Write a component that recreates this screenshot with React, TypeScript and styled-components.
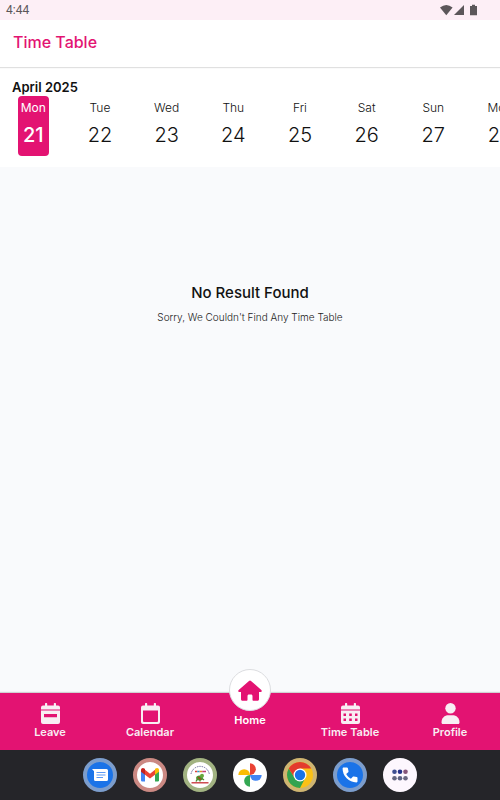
import React from "react";
import styled, { createGlobalStyle } from "styled-components";

const pink = "#e31372";

const GlobalStyle = createGlobalStyle`
  *, *::before, *::after { box-sizing: border-box; }
  body { margin: 0; font-family: Inter, "Open Sans", sans-serif; color: #111; background: #f9fafc; }
  button { font: inherit; color: inherit; border: 0; background: none; padding: 0; cursor: pointer; }
  a { text-decoration: none; }
  svg { display: block; }
  h1, h2, p { margin: 0; }
`;

const Screen = styled.div`
  display: flex;
  flex-direction: column;
  min-height: 100vh;
`;

const StatusBar = styled.div`
  display: flex;
  align-items: center;
  justify-content: space-between;
  padding: 0 22px 0 6px;
  height: 20px;
  background: #fdeff6;
  color: #5c575a;
  font: 400 12px/20px Roboto, sans-serif;
`;

const AppBar = styled.header`
  display: flex;
  align-items: center;
  height: 47px;
  padding: 0 13px 4px;
  background: #fff;
  box-shadow: 0 1px 1px rgba(0, 0, 0, 0.12);
  z-index: 1;
`;

const Title = styled.h1`
  color: ${pink};
  font-size: 16px;
  font-weight: 500;
  line-height: 24px;
`;

const DatePanel = styled.section`
  background: #fff;
  padding: 11px 0;
`;

const Month = styled.h2`
  padding: 0 12px;
  font-size: 13px;
  font-weight: 600;
  line-height: 18px;
`;

const DayStrip = styled.div`
  display: flex;
  overflow: hidden;
`;

const DaySlot = styled.div`
  flex: 0 0 calc(100% / 7.5);
  display: flex;
  justify-content: center;
`;

const Day = styled.button<{ $active?: boolean }>`
  display: flex;
  flex-direction: column;
  align-items: center;
  min-width: 31px;
  height: 60px;
  border-radius: 4px;

  && {
    background: ${(p) => (p.$active ? pink : "transparent")};
    color: ${(p) => (p.$active ? "#fff" : "#111")};
  }
`;

const DayName = styled.span<{ $active?: boolean }>`
  font-size: 12px;
  font-weight: ${(p) => (p.$active ? 400 : 300)};
  line-height: 24px;
`;

const DayNumber = styled.span<{ $active?: boolean }>`
  font-size: 20px;
  font-weight: ${(p) => (p.$active ? 500 : 300)};
  line-height: 30px;
`;

const Content = styled.main`
  flex: 1;
  padding: 114px 16px 40px;
  text-align: center;
`;

const EmptyTitle = styled.h2`
  font-size: 15px;
  font-weight: 500;
  line-height: 24px;
`;

const EmptyText = styled.p`
  color: #222;
  font-size: 10px;
  font-weight: 300;
  line-height: 24px;
`;

const BottomNav = styled.nav`
  display: grid;
  grid-template-columns: repeat(5, 1fr);
  height: 57px;
  background: ${pink};
  box-shadow: 0 -1px 1px rgba(0, 0, 0, 0.16);
`;

const NavLink = styled.a`
  display: flex;
  flex-direction: column;
  align-items: center;
  padding-top: 10px;
  color: #f8eef3;
  font-size: 11px;
  font-weight: 600;
  line-height: 16px;
`;

const HomeLink = styled(NavLink)`
  padding-top: 0;
  gap: 1px;
  color: #fff;
`;

const HomeCircle = styled.span`
  display: grid;
  place-items: center;
  width: 42px;
  height: 42px;
  margin-top: -24px;
  border: 1px solid #dcdde0;
  border-radius: 50%;
  background: #fff;
  color: ${pink};
`;

const Dock = styled.footer`
  display: flex;
  align-items: center;
  justify-content: center;
  gap: 16px;
  height: 50px;
  background: #252529;
`;

const DockButton = styled.button<{ $ring: string; $fill: string }>`
  width: 34px;
  height: 34px;
  border-radius: 50%;

  && {
    background: ${(p) => p.$fill};
    border: 4px solid ${(p) => p.$ring};
  }
`;

const StatusIcons = () => (
  <svg width="38" height="12" viewBox="0 0 38 12" fill="currentColor" aria-hidden="true">
    <path d="M0 3.600Q6.300-1.700 12.600 3.600L6.300 11.300Z" />
    <path d="M24 1V11H14Z" />
    <path d="M30 2h2V.8h3V2h2v9.200h-7Z" />
  </svg>
);

const LeaveIcon = () => (
  <svg width="19" height="21" viewBox="0 0 19 21" aria-hidden="true">
    <path fill="currentColor" fillRule="evenodd" d="M4 1a1 1 0 0 1 2.200 0v1.500h6.600V1A1 1 0 0 1 15 1v1.500h2a2 2 0 0 1 2 2V6.500H0v-2a2 2 0 0 1 2-2h2ZM0 7.500h19V19a2 2 0 0 1-2 2H2a2 2 0 0 1-2-2ZM3 11v3.200h13V11Z" />
  </svg>
);

const CalendarIcon = () => (
  <svg width="19" height="21" viewBox="0 0 19 21" aria-hidden="true">
    <path fill="currentColor" fillRule="evenodd" d="M4 1a1 1 0 0 1 2.200 0v1.500h6.600V1A1 1 0 0 1 15 1v1.500h2a2 2 0 0 1 2 2V19a2 2 0 0 1-2 2H2a2 2 0 0 1-2-2V4.500a2 2 0 0 1 2-2h2ZM2 7.500V18a1 1 0 0 0 1 1h13a1 1 0 0 0 1-1V7.500Z" />
  </svg>
);

const TimeTableIcon = () => (
  <svg width="19" height="21" viewBox="0 0 19 21" aria-hidden="true">
    <path fill="currentColor" fillRule="evenodd" d="M4 1a1 1 0 0 1 2.200 0v1.500h6.600V1A1 1 0 0 1 15 1v1.500h2a2 2 0 0 1 2 2V6.500H0v-2a2 2 0 0 1 2-2h2ZM0 7.500h19V19a2 2 0 0 1-2 2H2a2 2 0 0 1-2-2ZM2.500 10.500V13H5v-2.500ZM8.200 10.500V13h2.600v-2.500ZM14 10.500V13h2.500v-2.500ZM2.500 15.500V18H5v-2.500ZM8.200 15.500V18h2.600v-2.500ZM14 15.500V18h2.500v-2.500Z" />
  </svg>
);

const ProfileIcon = () => (
  <svg width="19" height="21" viewBox="0 0 19 21" fill="currentColor" aria-hidden="true">
    <circle cx="9.500" cy="5.200" r="5.200" />
    <path d="M.5 19.500C.5 15 3.500 12.300 7.500 12.300h4c4 0 7 2.700 7 7.200 0 .9-.5 1.500-1.300 1.500H1.800C1 21 .5 20.400.5 19.500Z" />
  </svg>
);

const HomeIcon = () => (
  <svg width="24" height="21" viewBox="0 0 24 21" fill="currentColor" aria-hidden="true">
    <path d="M11 .9a1.600 1.600 0 0 1 2 0L23.300 10c.9.800.4 2-.8 2H21v7.300c0 .9-.6 1.500-1.500 1.500h-4c-.6 0-1-.4-1-1V16c0-.9-.6-1.500-1.500-1.500h-2c-.9 0-1.500.6-1.500 1.500v3.800c0 .6-.4 1-1 1h-4c-.9 0-1.500-.6-1.500-1.500V12H1.500c-1.200 0-1.700-1.200-.8-2Z" />
  </svg>
);

const MessagesArt = () => (
  <svg width="26" height="26" viewBox="0 0 26 26" aria-hidden="true">
    <path fill="#fff" d="M5 7h14.500a1.500 1.500 0 0 1 1.500 1.500v9a1.500 1.500 0 0 1-1.500 1.500h-11A1.500 1.500 0 0 1 7 17.500V9.300Z" />
    <path stroke="#5b9af5" strokeWidth="1.200" d="M9.500 10.500h9M9.500 13h9M9.500 15.500h6.500" />
  </svg>
);

const MailArt = () => (
  <svg width="26" height="26" viewBox="0 0 26 26" aria-hidden="true">
    <path fill="#4285f4" d="M4 8.500 8 11v8.500H5.200A1.200 1.200 0 0 1 4 18.300Z" />
    <path fill="#34a853" d="M18 11l4-2.500v9.800a1.200 1.200 0 0 1-1.200 1.200H18Z" />
    <path fill="#ea4335" d="M8 7.800l5 3.900 5-3.900v5L13 16.600l-5-3.800Z" />
    <path fill="#c5221f" d="M4 8c0-2 2-2.600 3.400-1.500L8 7v5.800L4 9.800Z" />
    <path fill="#fbbc04" d="M22 8c0-2-2-2.600-3.400-1.500L18 7v5.800l4-3Z" />
  </svg>
);

const SchoolArt = () => (
  <svg width="26" height="26" viewBox="0 0 26 26" fill="none" aria-hidden="true">
    <path d="M4 12A9.300 9.300 0 0 1 22.300 12" stroke="#6a6a9c" strokeWidth="1" strokeDasharray="1.500 .9" />
    <path d="M8 9.500h2.300" stroke="#e2453c" strokeWidth="1.500" />
    <path d="M10.300 9.500h2.300" stroke="#2b9ccc" strokeWidth="1.500" />
    <path d="M12.600 9.500h2.600" stroke="#e38a2d" strokeWidth="1.500" />
    <path d="M15.200 9.500H19" stroke="#c93f77" strokeWidth="1.500" />
    <ellipse cx="12.500" cy="16" rx="3.400" ry="2.500" fill="#4f962e" />
    <circle cx="15" cy="13.800" r="2" fill="#67a83b" />
    <path d="m10.500 17-1.500 2.500M13 17v2.500M15 16.500l2 1.500" stroke="#4f8a30" strokeWidth="1.400" />
    <path d="m11 15 3 2.500" stroke="#a64325" strokeWidth="1.400" />
    <path d="M4.500 20.800h17" stroke="#c62d35" strokeWidth="1.300" />
  </svg>
);

const PhotosArt = () => (
  <svg width="26" height="26" viewBox="0 0 26 26" aria-hidden="true">
    <path fill="#ea4335" d="M13 1.300a5.850 5.850 0 0 1 0 11.700Z" />
    <path fill="#4285f4" d="M24.700 13A5.850 5.850 0 0 1 13 13Z" />
    <path fill="#34a853" d="M13 24.700A5.850 5.850 0 0 1 13 13Z" />
    <path fill="#fbbc04" d="M1.300 13A5.850 5.850 0 0 1 13 13Z" />
  </svg>
);

const ChromeArt = () => (
  <svg width="26" height="26" viewBox="0 0 26 26" aria-hidden="true">
    <circle cx="13" cy="13" r="13" fill="#fbc116" />
    <path fill="#31a350" d="M1.750 6.500A13 13 0 0 0 13 26l5.200-10H7.800Z" />
    <path fill="#e33b2e" d="M1.750 6.500A13 13 0 0 1 24.250 6.500H13L7.800 16Z" />
    <circle cx="13" cy="13" r="6.500" fill="#fff" />
    <circle cx="13" cy="13" r="5.200" fill="#1a73e8" />
  </svg>
);

const PhoneArt = () => (
  <svg width="26" height="26" viewBox="0 0 26 26" aria-hidden="true">
    <path fill="#fff" d="M6.700 5.500h3.200c.5 0 .9.300 1 .8l.6 3c.1.400 0 .7-.3 1l-2 1.800c1.200 2.100 2.600 3.500 4.700 4.700l1.900-2c.3-.3.600-.4 1-.3l2.900.6c.5.100.8.500.8 1v3.200c0 .6-.5 1.100-1.100 1.100A13.800 13.800 0 0 1 5.600 6.600c0-.6.500-1.100 1.100-1.100Z" />
  </svg>
);

const AppsArt = () => (
  <svg width="26" height="26" viewBox="0 0 26 26" aria-hidden="true">
    <circle cx="7.500" cy="9.800" r="2.300" fill="#3e4f91" />
    <circle cx="13" cy="9.800" r="2.300" fill="#26338a" />
    <circle cx="18.500" cy="9.800" r="2.300" fill="#865579" />
    <circle cx="7.500" cy="16.300" r="2.300" fill="#646780" />
    <circle cx="13" cy="16.300" r="2.300" fill="#5d6382" />
    <circle cx="18.500" cy="16.300" r="2.300" fill="#6a6780" />
  </svg>
);

const days = [
  ["Mon", 21], ["Tue", 22], ["Wed", 23], ["Thu", 24],
  ["Fri", 25], ["Sat", 26], ["Sun", 27], ["Mon", 28],
] as const;

const dockApps = [
  { name: "Messages", ring: "#7c9dcc", fill: "#1a73e8", Art: MessagesArt },
  { name: "Gmail", ring: "#cb8983", fill: "#fff", Art: MailArt },
  { name: "School", ring: "#a2b382", fill: "#fff", Art: SchoolArt },
  { name: "Photos", ring: "#fff", fill: "#fff", Art: PhotosArt },
  { name: "Chrome", ring: "#cfb571", fill: "#cfb571", Art: ChromeArt },
  { name: "Phone", ring: "#7c9dcc", fill: "#1a73e8", Art: PhoneArt },
  { name: "All apps", ring: "#fdf7fe", fill: "#fdf7fe", Art: AppsArt },
];

export default function App() {
  return (
    <Screen>
      <GlobalStyle />
      <StatusBar>
        <span>4:44</span>
        <StatusIcons />
      </StatusBar>
      <AppBar>
        <Title>Time Table</Title>
      </AppBar>
      <DatePanel>
        <Month>April 2025</Month>
        <DayStrip>
          {days.map(([name, date]) => {
            const active = date === 21;
            return (
              <DaySlot key={date}>
                <Day type="button" $active={active} aria-pressed={active}>
                  <DayName $active={active}>{name}</DayName>
                  <DayNumber $active={active}>{date}</DayNumber>
                </Day>
              </DaySlot>
            );
          })}
        </DayStrip>
      </DatePanel>
      <Content>
        <EmptyTitle>No Result Found</EmptyTitle>
        <EmptyText>Sorry, We Couldn't Find Any Time Table</EmptyText>
      </Content>
      <BottomNav>
        <NavLink href="#leave"><LeaveIcon />Leave</NavLink>
        <NavLink href="#calendar"><CalendarIcon />Calendar</NavLink>
        <HomeLink href="#home"><HomeCircle><HomeIcon /></HomeCircle>Home</HomeLink>
        <NavLink href="#timetable"><TimeTableIcon />Time Table</NavLink>
        <NavLink href="#profile"><ProfileIcon />Profile</NavLink>
      </BottomNav>
      <Dock>
        {dockApps.map(({ name, ring, fill, Art }) => (
          <DockButton key={name} type="button" aria-label={name} $ring={ring} $fill={fill}>
            <Art />
          </DockButton>
        ))}
      </Dock>
    </Screen>
  );
}
